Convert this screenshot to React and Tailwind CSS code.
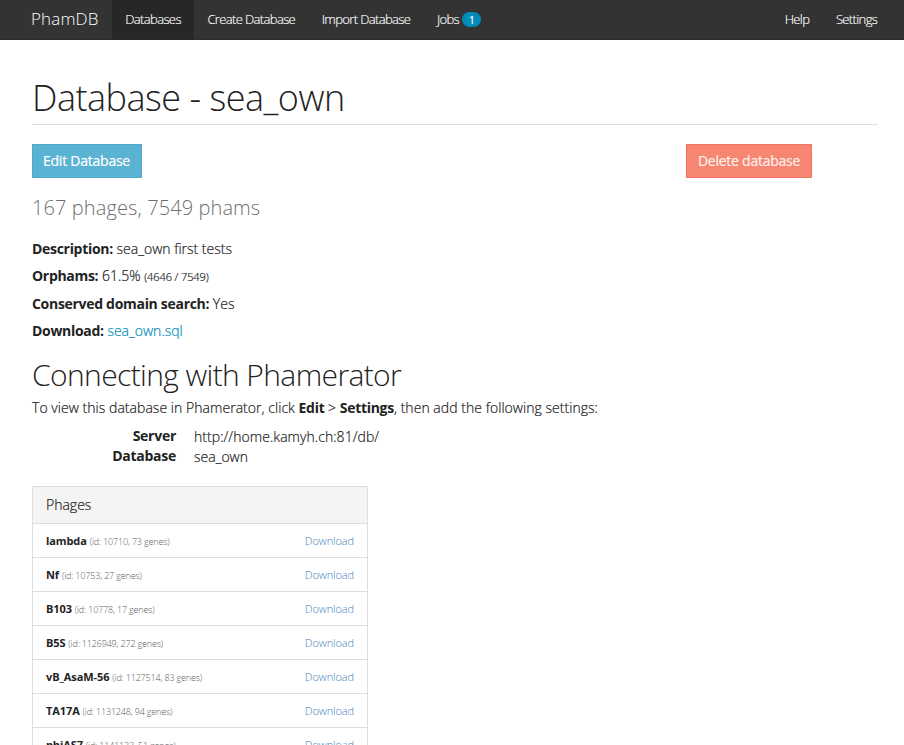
const phages = [
  ["lambda", 10710, 73],
  ["Nf", 10753, 27],
  ["B103", 10778, 17],
  ["B5S", 1126949, 272],
  ["vB_AsaM-56", 1127514, 83],
  ["TA17A", 1131248, 94],
  ["phiAS7", 1141133, 51],
];

function NavItem({ children, active }) {
  return (
    <a className={"flex h-[39px] items-center px-[13.3px] pb-[2px] text-[13px] tracking-[-0.63px] whitespace-nowrap text-white [-webkit-text-stroke:0.15px] " + (active ? "bg-[#272727]" : "")}>
      {children}
    </a>
  );
}

function Navbar() {
  return (
    <nav className="flex h-10 items-start justify-between border-b border-[#2b2b2b] bg-[#333333] pr-[13.5px] pl-[31px] font-light">
      <div className="flex">
        <a className="flex h-[38px] w-[81px] items-center text-[17px] tracking-[0.15px] text-white">PhamDB</a>
        <NavItem active>Databases</NavItem>
        <NavItem>Create Database</NavItem>
        <NavItem>Import Database</NavItem>
        <NavItem>
          Jobs
          <span className="mt-[2px] ml-[3px] flex h-[15px] w-[19px] items-center justify-center rounded-full bg-[#008cba] text-[11px] font-normal">1</span>
        </NavItem>
      </div>
      <div className="flex">
        <NavItem>Help</NavItem>
        <NavItem>Settings</NavItem>
      </div>
    </nav>
  );
}

function Bold({ children }) {
  return <b className="font-bold tracking-[-0.3px] [-webkit-text-stroke:0]">{children}</b>;
}

function PhageRow({ phage: [name, id, genes] }) {
  return (
    <li className="flex h-[34px] shrink-0 items-center justify-between border-t border-[#dddddd] px-[13px] pt-[2px] text-[11px]">
      <span className="pt-px">
        <b className="font-bold tracking-[-0.1px]">{name}</b>{" "}
        <span className="text-[9px] font-light tracking-[-0.17px] text-[#5c5c5c]">(id: {id}, {genes} genes)</span>
      </span>
      <a className="font-light tracking-[-0.1px] text-[#4482bb]">Download</a>
    </li>
  );
}

export default function App() {
  return (
    <div className="h-[745px] overflow-hidden bg-white font-['Open_Sans',sans-serif] text-[14px] leading-5 text-[#222222]">
      <Navbar />
      <main className="pr-[26px] pl-8">
        <h1 className="flex h-[85px] items-end border-b border-[#dddddd] pb-[4px] text-[36px] leading-[44px] font-light tracking-[-0.5px]">Database - sea_own</h1>
        <div className="mt-[19px] flex justify-between pr-[66px]">
          <button className="h-[34px] w-[110px] border border-[#53a9c8] bg-[#5bb3d3] pr-px text-[14px] tracking-[-0.24px] text-white [-webkit-text-stroke:0.2px]">Edit Database</button>
          <button className="h-[34px] w-[126px] border border-[#f07562] bg-[#f68571] text-[14px] tracking-[-0.25px] text-[#fff0ed] [-webkit-text-stroke:0.2px]">Delete database</button>
        </div>
        <p className="mt-[17px] h-[26px] text-[20px] leading-[26px] font-light tracking-[0.1px] text-[#6f6f6f]">167 phages, 7549 phams</p>
        <div className="mt-[18px] flex flex-col gap-[7.4px] font-light [-webkit-text-stroke:0.2px]">
          <p><Bold>Description:</Bold> sea_own first tests</p>
          <p><Bold>Orphams:</Bold> 61.5% <small className="text-[11px] leading-none tracking-[-0.1px]">(4646 / 7549)</small></p>
          <p><Bold>Conserved domain search:</Bold> Yes</p>
          <p><Bold>Download:</Bold> <a className="text-[#008cba]">sea_own.sql</a></p>
        </div>
        <h2 className="mt-[13.8px] h-[40px] text-[30px] leading-[40px] font-light tracking-[-0.62px]">Connecting with Phamerator</h2>
        <p className="mt-[3px] font-light tracking-[0.04px] [-webkit-text-stroke:0.2px]">
          To view this database in Phamerator, click <Bold>Edit</Bold> &gt; <Bold>Settings</Bold>, then add the following settings:
        </p>
        <dl className="mt-[8px] grid grid-cols-[144px_auto] gap-x-[18px] font-light">
          <dt className="text-right font-bold tracking-[-0.26px]">Server</dt>
          <dd className="pt-px tracking-[0.05px] [-webkit-text-stroke:0.2px]">http://home.kamyh.ch:81/db/</dd>
          <dt className="-mt-px text-right font-bold tracking-[-0.26px]">Database</dt>
          <dd className="[-webkit-text-stroke:0.2px]">sea_own</dd>
        </dl>
        <section className="mt-[19px] w-[336px] border border-[#dddddd]">
          <h3 className="flex h-9 items-center bg-[#f4f4f4] px-[13px] text-[14px] font-light [-webkit-text-stroke:0.2px]">Phages</h3>
          <ul>
            {phages.map((phage) => <PhageRow key={phage[1]} phage={phage} />)}
          </ul>
        </section>
      </main>
    </div>
  );
}
